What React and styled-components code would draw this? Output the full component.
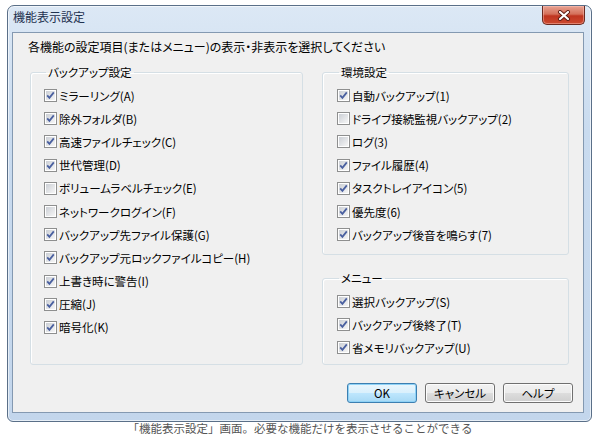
import React from "react";
import styled, { createGlobalStyle } from "styled-components";

const GlobalStyle = createGlobalStyle`
  html, body { margin: 0; padding: 0; background: #ffffff; }
  body {
    font-family: "Noto Sans CJK JP", "Noto Sans", sans-serif;
    font-feature-settings: "palt";
  }
`;

const Page = styled.div`
  width: 600px;
  height: 437px;
  padding: 5px 0 0 7px;
  box-sizing: border-box;
`;

const Window = styled.div`
  width: 585px;
  height: 417px;
  box-sizing: border-box;
  border: 1px solid #5a6f88;
  border-radius: 7px 7px 6px 6px;
  background: linear-gradient(180deg, #dce8f5 0%, #c9dbef 30%, #c3d6ec 100%);
  padding: 0 7px 8px 4px;
  display: flex;
  flex-direction: column;
  box-shadow: inset 0 0 0 1px rgba(255, 255, 255, 0.6);
`;

const TitleBar = styled.div`
  height: 26px;
  display: flex;
  justify-content: space-between;
  align-items: flex-start;
`;

const Title = styled.div`
  font-size: 12px;
  line-height: 22px;
  color: #1f3250;
  padding-left: 1px;
`;

const CloseButton = styled.div`
  width: 43px;
  height: 19px;
  margin-right: -1px;
  box-sizing: border-box;
  border: 1px solid #6a2a20;
  border-top: none;
  border-radius: 0 0 5px 5px;
  background: linear-gradient(180deg, #e8a292 0%, #d4705a 45%, #bf3520 55%, #cc4a30 100%);
  display: flex;
  align-items: center;
  justify-content: center;
  box-shadow: inset 0 0 0 1px rgba(255, 200, 190, 0.45);
`;

const Client = styled.div`
  flex: 1;
  border: 1px solid #8499b1;
  background: #f0f0f0;
  display: flex;
  flex-direction: column;
`;

const Instruction = styled.div`
  font-size: 12px;
  line-height: 16px;
  color: #000;
  padding: 6px 0 0 15px;
  height: 16px;
`;

const GroupsRow = styled.div`
  display: flex;
  gap: 19px;
  padding: 9px 14px 0 17px;
`;

const Column = styled.div`
  display: flex;
  flex-direction: column;
  gap: 15px;
`;

const Group = styled.fieldset`
  margin: 0;
  width: ${(p) => p.$w}px;
  height: ${(p) => p.$h}px;
  box-sizing: border-box;
  border: 1px solid #d5dfe5;
  border-radius: 3px;
  box-shadow: inset 1px 1px 0 #ffffff;
  padding: 4px 0 0 ${(p) => p.$pl}px;
  display: flex;
  flex-direction: column;
`;

const Legend = styled.legend`
  font-size: 11.5px;
  line-height: 16px;
  color: #000;
  padding: 0 2px;
  margin-left: 2px;
`;

const Row = styled.label`
  display: flex;
  align-items: center;
  height: 23.2px;
  font-size: 11.5px;
  color: #000;
  gap: 2px;
`;

const ButtonRow = styled.div`
  display: flex;
  justify-content: flex-end;
  gap: 8px;
  padding-right: 10px;
  margin-top: 18px;
`;

const Button = styled.div`
  width: 70px;
  height: 20px;
  box-sizing: border-box;
  border: 1px solid ${(p) => (p.$default ? "#3c7fb1" : "#707070")};
  border-radius: 3px;
  display: flex;
  align-items: center;
  justify-content: center;
  font-size: 11.5px;
  color: #000;
  background: ${(p) =>
    p.$default
      ? "linear-gradient(180deg, #eaf6fd 0%, #d9f0fc 50%, #bee6fd 51%, #a7d9f5 100%)"
      : "linear-gradient(180deg, #f2f2f2 0%, #ebebeb 50%, #dddddd 51%, #cfcfcf 100%)"};
  box-shadow: inset 0 0 0 1px ${(p) => (p.$default ? "#8fd2f6" : "#fcfcfc")};
`;

const Caption = styled.div`
  text-align: center;
  font-size: 11.5px;
  line-height: 14px;
  color: #555;
  margin-top: -1px;
  padding-right: 7px;
  font-feature-settings: normal;
`;

const CheckBox = ({ checked }) => (
  <svg width="13" height="13" viewBox="0 0 13 13">
    <defs>
      <linearGradient id="cbg" x1="0" y1="0" x2="1" y2="1">
        <stop offset="0" stopColor="#cbcfd5" />
        <stop offset="1" stopColor="#f6f6f6" />
      </linearGradient>
    </defs>
    <rect x="0.5" y="0.5" width="12" height="12" fill="#fff" stroke="#8e8f8f" />
    <rect x="2" y="2" width="9" height="9" fill="url(#cbg)" />
    {checked && (
      <path d="M3.2 6.4 L5.4 8.8 L9.8 3.4" fill="none" stroke="#4a60a0" strokeWidth="1.8" />
    )}
  </svg>
);

const Item = ({ checked, children }) => (
  <Row>
    <CheckBox checked={checked} />
    <span>{children}</span>
  </Row>
);

const backup = [
  ["ミラーリング(A)", true],
  ["除外フォルダ(B)", true],
  ["高速ファイルチェック(C)", true],
  ["世代管理(D)", true],
  ["ボリュームラベルチェック(E)", false],
  ["ネットワークログイン(F)", false],
  ["バックアップ先ファイル保護(G)", true],
  ["バックアップ元ロックファイルコピー(H)", true],
  ["上書き時に警告(I)", true],
  ["圧縮(J)", true],
  ["暗号化(K)", true],
];

const env = [
  ["自動バックアップ(1)", true],
  ["ドライブ接続監視バックアップ(2)", false],
  ["ログ(3)", false],
  ["ファイル履歴(4)", true],
  ["タスクトレイアイコン(5)", true],
  ["優先度(6)", true],
  ["バックアップ後音を鳴らす(7)", true],
];

const menu = [
  ["選択バックアップ(S)", true],
  ["バックアップ後終了(T)", true],
  ["省メモリバックアップ(U)", true],
];

export default function App() {
  return (
    <>
      <GlobalStyle />
      <Page>
        <Window>
          <TitleBar>
            <Title>機能表示設定</Title>
            <CloseButton>
              <svg width="14" height="11" viewBox="0 0 14 11">
                <path d="M3 2 L11 9 M11 2 L3 9" stroke="#5a1a12" strokeWidth="4" strokeLinecap="round" />
                <path d="M3 2 L11 9 M11 2 L3 9" stroke="#ffffff" strokeWidth="2.2" strokeLinecap="round" />
              </svg>
            </CloseButton>
          </TitleBar>
          <Client>
            <Instruction>各機能の設定項目(またはメニュー)の表示・非表示を選択してください</Instruction>
            <GroupsRow>
              <Group $w={273} $h={301} $pl={13}>
                <Legend>バックアップ設定</Legend>
                {backup.map(([t, c]) => (
                  <Item key={t} checked={c}>{t}</Item>
                ))}
              </Group>
              <Column>
                <Group $w={247} $h={191} $pl={14}>
                  <Legend>環境設定</Legend>
                  {env.map(([t, c]) => (
                    <Item key={t} checked={c}>{t}</Item>
                  ))}
                </Group>
                <Group $w={247} $h={95} $pl={14}>
                  <Legend>メニュー</Legend>
                  {menu.map(([t, c]) => (
                    <Item key={t} checked={c}>{t}</Item>
                  ))}
                </Group>
              </Column>
            </GroupsRow>
            <ButtonRow>
              <Button $default>OK</Button>
              <Button>キャンセル</Button>
              <Button>ヘルプ</Button>
            </ButtonRow>
          </Client>
        </Window>
        <Caption>「機能表示設定」画面。必要な機能だけを表示させることができる</Caption>
      </Page>
    </>
  );
}
